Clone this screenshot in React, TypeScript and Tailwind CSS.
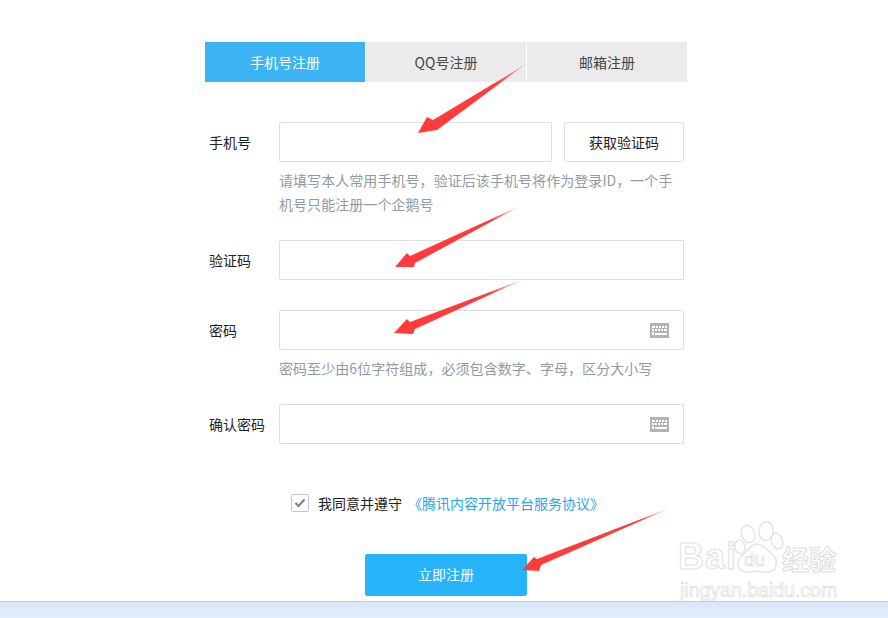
import type { FC, ReactNode } from "react";

const FONT = "[font-family:'Noto_Sans_CJK_SC','Liberation_Sans',sans-serif]";

const KeyboardIcon: FC = () => (
  <svg width="19" height="15" viewBox="0 0 19 15" className="shrink-0">
    <rect width="19" height="15" fill="#b3b3b3" />
    <g fill="#fff">
      <rect x="2" y="3" width="3" height="2" />
      <rect x="6" y="3" width="2" height="2" />
      <rect x="9" y="3" width="2" height="2" />
      <rect x="12" y="3" width="2" height="2" />
      <rect x="15" y="3" width="2" height="2" />
      <rect x="2" y="6" width="2" height="2" />
      <rect x="5" y="6" width="2" height="2" />
      <rect x="8" y="6" width="2" height="2" />
      <rect x="11" y="6" width="2" height="2" />
      <rect x="14" y="6" width="3" height="2" />
      <rect x="2" y="9" width="2" height="3" />
      <rect x="5" y="10" width="12" height="2" />
    </g>
  </svg>
);

const Row: FC<{ label: string; children: ReactNode; className?: string }> = ({ label, children, className }) => (
  <div className={`flex items-center ${className ?? ""}`}>
    <label className="w-[74px] pl-[4px] pb-[1px] shrink-0 text-sm text-[#222]">{label}</label>
    {children}
  </div>
);

const Field: FC<{ keyboard?: boolean; className?: string }> = ({ keyboard, className }) => (
  <div className={`h-[40px] flex items-center bg-white border border-[#dcdfe2] rounded-[2px] pr-[14px] ${className ?? "w-[405px]"}`}>
    <input className="flex-1 min-w-0 h-full outline-none bg-transparent" />
    {keyboard && <KeyboardIcon />}
  </div>
);

const Hint: FC<{ children: ReactNode; className?: string }> = ({ children, className }) => (
  <p className={`ml-[74px] text-sm leading-[24px] tracking-[0.06px] text-[#8f9aa5] ${className ?? ""}`}>{children}</p>
);

// tail, waist, barb, tip, barb, waist
const ARROWS = [
  { id: "a1", pts: "526,64 433,120 427,117 418,133 437,130 441,127", x1: 526, y1: 64, x2: 495, y2: 83 },
  { id: "a2", pts: "520,206 410,256 407,253 395,267 414,267 415,263", x1: 520, y1: 206, x2: 490, y2: 220 },
  { id: "a3", pts: "522,280 410,322 407,319 394,333 413,334 415,329", x1: 522, y1: 280, x2: 490, y2: 293 },
  { id: "a4", pts: "670,508 537,559 534,557 522,570 539,571 541,565", x1: 670, y1: 508, x2: 640, y2: 520 },
];

const Arrows: FC = () => (
  <svg width="888" height="618" className="absolute inset-0 pointer-events-none">
    <defs>
      {ARROWS.map((a) => (
        <linearGradient key={a.id} id={a.id} gradientUnits="userSpaceOnUse" x1={a.x1} y1={a.y1} x2={a.x2} y2={a.y2}>
          <stop offset="0" stopColor="#ff3b3b" stopOpacity="0.25" />
          <stop offset="1" stopColor="#ff3b3b" />
        </linearGradient>
      ))}
    </defs>
    {ARROWS.map((a) => (
      <polygon key={a.id} points={a.pts} fill={`url(#${a.id})`} />
    ))}
  </svg>
);

const Watermark: FC = () => (
  <div className="absolute left-[678px] top-[520px] w-[170px] h-[80px] pointer-events-none">
    <svg width="170" height="60" className="absolute left-0 top-0" fill="#fff" stroke="#e2e2e2" strokeWidth="1.4">
      <ellipse cx="70" cy="14" rx="6.5" ry="9" transform="rotate(-20 70 14)" />
      <ellipse cx="88" cy="11" rx="7" ry="9.5" transform="rotate(5 88 11)" />
      <ellipse cx="99" cy="21" rx="5.5" ry="8" transform="rotate(-20 99 21)" />
      <ellipse cx="62" cy="27" rx="5" ry="7" transform="rotate(-10 62 27)" />
      <path d="M79 24c6 0 9 5 14 9 5 4 6 8 5 12-1 6-7 8-12 7-5-1-9-1-14 0-6 1-11-2-12-7-1-5 2-8 6-11 4-3 6-10 13-10z" />
    </svg>
    <span className="absolute left-[0px] top-[17px] text-[36px] leading-[40px] font-bold tracking-[1px] text-white [-webkit-text-stroke:1px_#e0e0e0] [font-family:'Liberation_Sans',sans-serif]">
      Bai
    </span>
    <span className="absolute left-[66px] top-[29px] text-[19px] leading-[22px] text-white [-webkit-text-stroke:0.7px_#dcdcdc] [font-family:'Liberation_Sans',sans-serif]">
      du
    </span>
    <span className="absolute left-[104px] top-[23px] text-[27px] leading-[32px] font-bold text-white [-webkit-text-stroke:1px_#dedede]">
      经验
    </span>
    <span className="absolute left-[2px] top-[59px] text-[19.5px] leading-[22px] text-white [-webkit-text-stroke:0.7px_#dcdcdc] [font-family:'Liberation_Sans',sans-serif]">
      jingyan.baidu.com
    </span>
  </div>
);

export default function App() {
  return (
    <div className={`relative w-[888px] h-[618px] overflow-hidden bg-white flex flex-col ${FONT}`}>
      <div className="ml-[205px] w-[482px] pt-[42px]">
        <div className="flex gap-[1px] h-[40px] text-sm leading-[40px] text-center">
          <div className="flex-1 bg-[#3cb4f4] text-white">手机号注册</div>
          <div className="flex-1 bg-[#ebebeb] text-[#444]">QQ号注册</div>
          <div className="flex-1 bg-[#ebebeb] text-[#444]">邮箱注册</div>
        </div>

        <Row label="手机号" className="mt-[40px]">
          <Field className="w-[273px]" />
          <button className="ml-[12px] w-[120px] h-[40px] bg-white border border-[#dcdfe2] rounded-[2px] text-sm text-[#222]">
            获取验证码
          </button>
        </Row>
        <Hint className="mt-[6px] w-[396px]">请填写本人常用手机号，验证后该手机号将作为登录ID，一个手机号只能注册一个企鹅号</Hint>

        <Row label="验证码" className="mt-[24px]">
          <Field />
        </Row>

        <Row label="密码" className="mt-[30px]">
          <Field keyboard />
        </Row>
        <Hint className="mt-[6px] w-[405px]">密码至少由6位字符组成，必须包含数字、字母，区分大小写</Hint>

        <Row label="确认密码" className="mt-[24px]">
          <Field keyboard />
        </Row>

        <div className="mt-[50px] ml-[86px] h-[17px] flex items-center text-sm whitespace-nowrap">
          <span className="w-[18px] h-[18px] bg-white border border-[#c2c6d2] rounded-[2px] flex items-center justify-center">
            <svg width="12" height="10" viewBox="0 0 12 10" fill="none" stroke="#7b808c" strokeWidth="2.2">
              <path d="M1.5 5l3 3 6-6.5" />
            </svg>
          </span>
          <span className="ml-[9px] text-[#222]">我同意并遵守</span>
          <span className="ml-[6px] text-[#2aa4f0]">《腾讯内容开放平台服务协议》</span>
        </div>

        <button className="block mt-[43px] ml-[160px] w-[162px] h-[42px] pb-[2px] rounded-[2px] bg-[#28b4fa] text-white text-sm">
          立即注册
        </button>
      </div>

      <div className="mt-auto h-[17px] border-t border-[#b9cce4] bg-gradient-to-b from-[#d8e7f9] to-[#e2edfb]" />

      <Watermark />
      <Arrows />
    </div>
  );
}
